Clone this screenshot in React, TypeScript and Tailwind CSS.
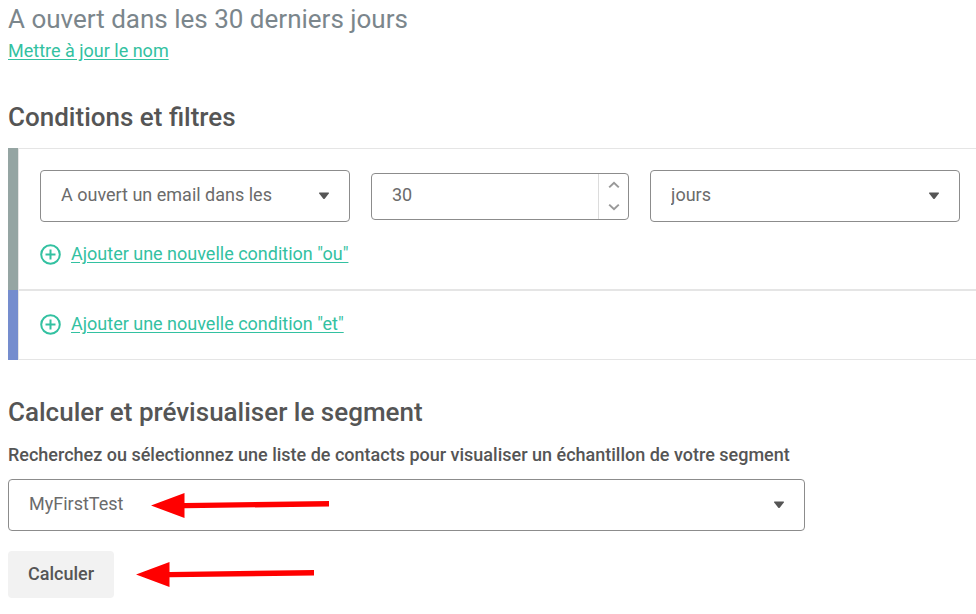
import type { ReactNode } from "react";

function Caret() {
  return (
    <svg
      viewBox="0 0 12 8"
      aria-hidden="true"
      className="pointer-events-none absolute top-1/2 right-5 h-2 w-3 -translate-y-1/2 fill-[#555]"
    >
      <path d="M1.6 0.5h8.8q1 0 0.4 0.9L6.9 6.600q-0.9 1-1.8 0L1.200 1.400Q0.600 0.500 1.600 0.500z" />
    </svg>
  );
}

type SelectProps = { id: string; label?: string; options: string[] };

function Select({ id, label, options }: SelectProps) {
  return (
    <div className="relative w-full">
      <select
        id={id}
        aria-label={label}
        className="block h-[52px] w-full appearance-none rounded border border-[#8c8c8c] bg-white pr-10 pb-[2px] pl-5 text-lg text-[#6b6b6b]"
      >
        {options.map((option) => (
          <option key={option}>{option}</option>
        ))}
      </select>
      <Caret />
    </div>
  );
}

function NumberField() {
  return (
    <div className="flex h-[47px] w-full overflow-hidden rounded border border-[#8c8c8c] bg-white">
      <input
        type="text"
        inputMode="numeric"
        aria-label="Nombre"
        defaultValue="30"
        className="min-w-0 flex-1 pb-[2px] pl-5 text-lg text-[#6b6b6b] outline-none"
      />
      <div className="flex w-[30px] flex-col border-l border-[#dcdcdc]">
        <button type="button" aria-label="Augmenter" className="flex flex-1 items-center justify-center">
          <svg viewBox="0 0 12 8" className="h-2 w-3 fill-none stroke-[#999] stroke-2">
            <path d="M1.2 6.4 6 1.8l4.8 4.6" />
          </svg>
        </button>
        <button type="button" aria-label="Diminuer" className="flex flex-1 items-center justify-center">
          <svg viewBox="0 0 12 8" className="h-2 w-3 fill-none stroke-[#999] stroke-2">
            <path d="M1.2 1.6 6 6.2l4.8-4.6" />
          </svg>
        </button>
      </div>
    </div>
  );
}

function AddLink({ children }: { children: ReactNode }) {
  return (
    <a href="#" className="flex items-center gap-[10px] text-lg leading-6 text-[#33c1a1]">
      <svg viewBox="0 0 21 21" aria-hidden="true" className="mt-px h-[21px] w-[21px] fill-none stroke-[#33c1a1] stroke-2">
        <circle cx="10.5" cy="10.5" r="9.3" />
        <path d="M10.5 5.500v10M5.500 10.500h10" />
      </svg>
      <span className="underline underline-offset-2">{children}</span>
    </a>
  );
}

function Arrow() {
  return (
    <svg
      viewBox="0 0 178 25"
      aria-hidden="true"
      className="pointer-events-none h-[25px] w-[178px] fill-[#ff0000]"
    >
      <path d="M0 12.5 33.5 0v10L178 8v5.500L33.500 15.200V25z" />
    </svg>
  );
}

export default function App() {
  return (
    <main className="bg-white pl-2 font-['Roboto','Liberation_Sans',sans-serif] text-[#555]">
      <header className="pt-[3px]">
        <h1 className="text-[26px] leading-8 text-[#7b868c]">A ouvert dans les 30 derniers jours</h1>
        <a href="#" className="block w-fit pt-1 text-lg leading-6 text-[#33c1a1] underline underline-offset-2">
          Mettre à jour le nom
        </a>
      </header>

      <section className="pt-[38px]">
        <h2 className="text-[26px] leading-8 font-medium">Conditions et filtres</h2>
        <div className="mt-[15px]">
          <div className="flex">
            <div className="w-[10px] bg-[#95a5a3]" />
            <div className="flex-1 border-y border-l border-[#e5e5e5] pt-[21px] pr-4 pb-[23px] pl-[21px]">
              <div className="grid grid-cols-[6fr_5fr_6fr] items-center gap-[21px]">
                <Select
                  id="condition"
                  label="Condition"
                  options={["A ouvert un email dans les", "A cliqué dans les"]}
                />
                <NumberField />
                <Select id="unit" label="Unité" options={["jours", "semaines", "mois"]} />
              </div>
              <div className="mt-5">
                <AddLink>Ajouter une nouvelle condition "ou"</AddLink>
              </div>
            </div>
          </div>
          <div className="flex">
            <div className="w-[10px] bg-[#758dce]" />
            <div className="flex-1 border-y border-l border-[#e5e5e5] pt-[21px] pb-[23px] pl-[21px]">
              <AddLink>Ajouter une nouvelle condition "et"</AddLink>
            </div>
          </div>
        </div>
      </section>

      <section className="pt-9">
        <h2 className="text-[26px] leading-8 font-medium">Calculer et prévisualiser le segment</h2>
        <label htmlFor="list" className="mt-[15px] block text-lg leading-6 font-medium">
          Recherchez ou sélectionnez une liste de contacts pour visualiser un échantillon de votre segment
        </label>
        <div className="relative mt-3 w-full max-w-[797px]">
          <Select id="list" options={["MyFirstTest"]} />
          <div className="pointer-events-none absolute top-[14px] left-[143px]">
            <Arrow />
          </div>
        </div>
        <div className="mt-5 flex items-center gap-[22px]">
          <button type="button" className="h-[47px] rounded bg-[#f2f2f2] px-5 pb-[2px] text-lg font-medium">
            Calculer
          </button>
          <Arrow />
        </div>
      </section>
    </main>
  );
}
